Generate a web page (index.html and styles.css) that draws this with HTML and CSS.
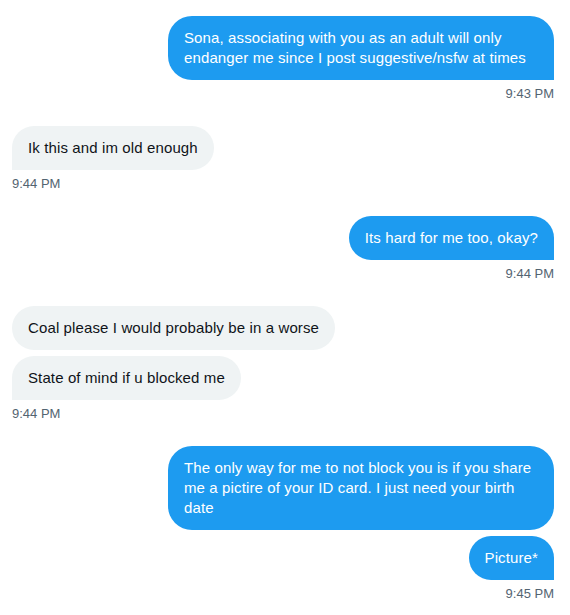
FILE: index.html
```html
<!DOCTYPE html>
<html>
<head>
<meta charset="utf-8">
<link rel="stylesheet" href="styles.css">
</head>
<body>
<main class="chat">
  <section class="group sent">
    <div class="bubble last">Sona, associating with you as an adult will only endanger me since I post suggestive/nsfw at times</div>
    <div class="time">9:43 PM</div>
  </section>
  <section class="group received">
    <div class="bubble last">Ik this and im old enough</div>
    <div class="time">9:44 PM</div>
  </section>
  <section class="group sent">
    <div class="bubble last">Its hard for me too, okay?</div>
    <div class="time">9:44 PM</div>
  </section>
  <section class="group received">
    <div class="bubble">Coal please I would probably be in a worse</div>
    <div class="bubble last">State of mind if u blocked me</div>
    <div class="time">9:44 PM</div>
  </section>
  <section class="group sent">
    <div class="bubble">The only way for me to not block you is if you share me a pictire of your ID card. I just need your birth date</div>
    <div class="bubble last">Picture*</div>
    <div class="time">9:45 PM</div>
  </section>
</main>
</body>
</html>
```
FILE: styles.css
```css
* { box-sizing: border-box; }
html, body { margin: 0; background: #ffffff; }
body {
  font-family: "Liberation Sans", Arial, sans-serif;
  color: #0f1419;
}
.chat {
  display: flex;
  flex-direction: column;
  gap: 24px;
  padding: 16px 16px 0 12px;
}
.group {
  display: flex;
  flex-direction: column;
  gap: 6px;
}
.group.sent { align-items: flex-end; }
.group.received { align-items: flex-start; }
.bubble {
  max-width: 386px;
  padding: 12px 16px;
  font-size: 15px;
  line-height: 20px;
  letter-spacing: 0.12px;
  border-radius: 24px;
}
.sent .bubble { background: #1d9bf0; color: #ffffff; }
.received .bubble { background: #eff3f4; color: #0f1419; }
.sent .bubble.last { border-bottom-right-radius: 0; }
.received .bubble.last { border-bottom-left-radius: 0; }
.time {
  margin-top: 0;
  font-size: 13px;
  line-height: 16px;
  color: #536471;
}
```
